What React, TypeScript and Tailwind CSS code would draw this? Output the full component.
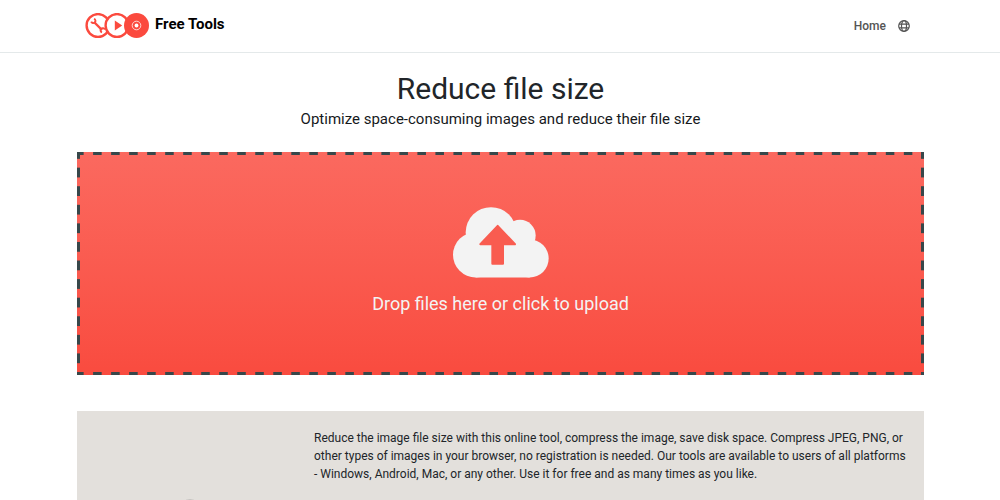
import { useState } from "react";

const Logo = () => {
    return (
        <svg viewBox="0 0 64 26" className="h-[26px] w-16 shrink-0" aria-hidden="true">
            <circle cx="13" cy="12.5" r="11.4" fill="white" stroke="#fb4a3e" strokeWidth="2.4" />
            <g stroke="#fb4a3e" fill="none" strokeLinecap="butt">
                <path d="M9 9 L17 17" strokeWidth="2.4" />
                <path d="M9 5.8 A2.2 2.2 0 1 1 6.2 8.6" strokeWidth="1.9" />
                <path d="M17 19.4 A2.2 2.2 0 1 1 19.8 16.6" strokeWidth="1.9" />
            </g>
            <circle cx="32" cy="12.5" r="11.4" fill="white" stroke="#fb4a3e" strokeWidth="2.4" />
            <path d="M29.8 7.4 L37.2 12.5 L29.8 17.6 Z" fill="#fb4a3e" />
            <circle cx="51.5" cy="12.5" r="12.5" fill="#fb4a3e" />
            <circle cx="51.5" cy="12.5" r="4.3" fill="none" stroke="white" strokeOpacity="0.75" strokeWidth="1" />
            <circle cx="51.5" cy="12.5" r="1.9" fill="white" />
        </svg>
    )
}

const GlobeIcon = () => {
    return (
        <svg viewBox="0 0 12 12" className="size-3" fill="none" stroke="#555555" strokeWidth="1.2" aria-hidden="true">
            <circle cx="6" cy="6" r="5.3" />
            <ellipse cx="6" cy="6" rx="2.5" ry="5.3" />
            <path d="M1 4.2h10M1 7.8h10" />
        </svg>
    )
}

const CloudUpload = () => {
    return (
        <svg viewBox="0 0 288 212" className="h-[71px] w-24" aria-hidden="true">
            <g fill="#f3f3f3">
                <circle cx="114" cy="76" r="76" />
                <circle cx="201" cy="85" r="47" />
                <circle cx="68" cy="143" r="68" />
                <circle cx="230" cy="154" r="57" />
                <path d="M68 90 H230 V211 H68 Z" />
            </g>
            <path
                d="M134 56 L186 111 H150 V170 H118 V111 H82 Z"
                fill="#f95c50"
                stroke="#f95c50"
                strokeWidth="6"
                strokeLinejoin="round"
            />
        </svg>
    )
}

// Long dashes that close up at every corner
const DashedFrame = () => {
    return (
        <>
            <span className="absolute inset-x-0 top-0 h-[3px] bg-[linear-gradient(90deg,#37474a_7px,transparent_7px_16px,#37474a_16px)] bg-[length:18px_3px] bg-repeat-round" />
            <span className="absolute inset-x-0 bottom-0 h-[3px] bg-[linear-gradient(90deg,#37474a_7px,transparent_7px_16px,#37474a_16px)] bg-[length:18px_3px] bg-repeat-round" />
            <span className="absolute inset-y-0 left-0 w-[3px] bg-[linear-gradient(180deg,#37474a_7px,transparent_7px_16px,#37474a_16px)] bg-[length:3px_18px] bg-repeat-round" />
            <span className="absolute inset-y-0 right-0 w-[3px] bg-[linear-gradient(180deg,#37474a_7px,transparent_7px_16px,#37474a_16px)] bg-[length:3px_18px] bg-repeat-round" />
        </>
    )
}

const DropZone = () => {
    const [files, setFiles] = useState<File[]>([]);

    return (
        <label
            className="relative mt-[23px] flex cursor-pointer flex-col items-center bg-linear-to-b from-[#fb695f] to-[#f94b3f] pt-[55px] pb-[57px]"
            onDragOver={(e) => e.preventDefault()}
            onDrop={(e) => {
                e.preventDefault()
                setFiles(Array.from(e.dataTransfer.files))
            }}
        >
            <DashedFrame />
            <CloudUpload />
            <span className="mt-3 text-[18px] leading-7 text-[#f3f3f3]">
                {files.length > 0 ? files.map((f) => f.name).join(", ") : "Drop files here or click to upload"}
            </span>
            <input
                type="file"
                accept="image/*"
                multiple
                className="sr-only"
                onChange={(e) => setFiles(Array.from(e.target.files ?? []))}
            />
        </label>
    )
}

export default function App() {
    return (
        <div className="flex h-screen flex-col overflow-hidden bg-white font-['Roboto',sans-serif] text-[#212529]">
            <header className="flex h-[53px] shrink-0 items-center justify-between border-b border-[#e4e9ea] px-[85px]">
                <a href="#" className="flex items-center gap-1.5">
                    <Logo />
                    <span className="pb-1 text-[15px] leading-5 font-bold text-black">Free Tools</span>
                </a>
                <nav className="flex items-center gap-3 pr-[5px]">
                    <a href="#" className="text-[12px] leading-4 font-medium text-[#555555]">Home</a>
                    <button type="button" aria-label="Language" className="cursor-pointer">
                        <GlobeIcon />
                    </button>
                </nav>
            </header>
            <main className="flex flex-1 flex-col pt-4 pr-[76px] pl-[77px]">
                <h1 className="text-center text-[30px] leading-10">Reduce file size</h1>
                <p className="text-center text-[15px] leading-5 text-[#16191c]">Optimize space-consuming images and reduce their file size</p>
                <DropZone />
                <section className="mt-9 flex flex-1 overflow-hidden bg-[#e3e0dc]">
                    <div className="flex w-[225px] shrink-0 justify-center pt-[88px]">
                        <svg viewBox="0 0 40 40" className="size-10 shrink-0" aria-hidden="true">
                            <circle cx="20" cy="20" r="19" fill="none" stroke="#a9a8a6" strokeWidth="1" />
                        </svg>
                    </div>
                    <p className="flex-1 pt-[18px] pr-4 pl-3 text-[12px] leading-[18px]">
                        Reduce the image file size with this online tool, compress the image, save disk space. Compress JPEG, PNG, or other types of images in your browser, no registration is needed. Our tools are available to users of all platforms - Windows, Android, Mac, or any other. Use it for free and as many times as you like.
                    </p>
                </section>
            </main>
        </div>
    )
}
